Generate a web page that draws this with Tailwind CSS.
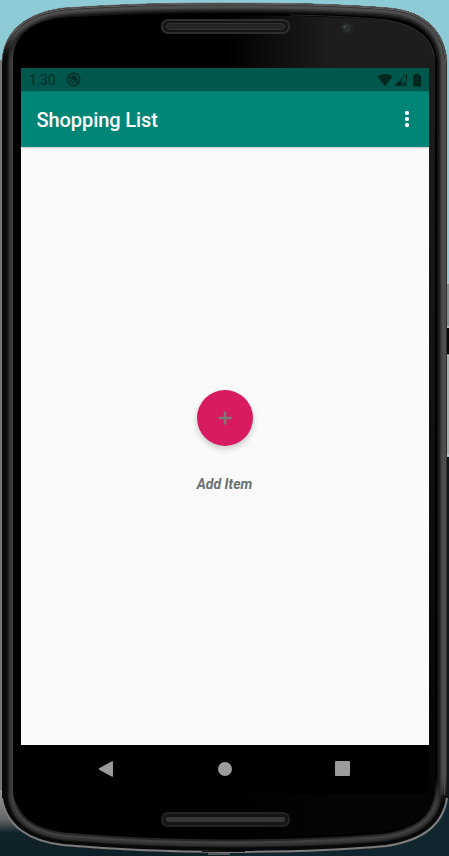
<!DOCTYPE html>
<html lang="en">
<head>
<meta charset="utf-8">
<meta name="viewport" content="width=device-width, initial-scale=1">
<title>Shopping List</title>
<script src="https://cdn.jsdelivr.net/npm/@tailwindcss/browser@4"></script>
</head>
<body class="relative h-[856px] w-[449px] overflow-hidden bg-[#8fcbd6] font-['Roboto',sans-serif]">
<!-- device frame and wallpaper -->
<svg class="absolute inset-0" width="449" height="856" viewBox="0 0 449 856" aria-hidden="true">
  <defs>
    <linearGradient id="glassT" x1="225" x2="330" y1="0" y2="0" gradientUnits="userSpaceOnUse"><stop offset="0" stop-color="#000"/><stop offset="1" stop-color="#1d1d1d"/></linearGradient>
    <linearGradient id="fade" x1="0" x2="0" y1="60" y2="780" gradientUnits="userSpaceOnUse"><stop offset="0" stop-color="#000" stop-opacity="0"/><stop offset="1" stop-color="#000" stop-opacity=".85"/></linearGradient>
    <linearGradient id="sea" x1="0" x2="0" y1="790" y2="856" gradientUnits="userSpaceOnUse"><stop offset="0" stop-color="#999"/><stop offset=".45" stop-color="#606464"/><stop offset=".65" stop-color="#10222a"/><stop offset="1" stop-color="#0d2028"/></linearGradient>
    <filter id="soft"><feGaussianBlur stdDeviation="1"/></filter>
    <filter id="wide" x="-20%" y="-20%" width="140%" height="140%"><feGaussianBlur stdDeviation="8"/></filter>
    <path id="body" d="M2 62C3 30 29 12 64 8C120 4 170 3 225 3C282 3 340 4 389 8C424 11 445 31 447 62V799C443 827 420 842 386 847C340 851 280 853 225 853C167 853 110 850 63 846C29 842 6 827 2 799Z"/>
    <path id="glass" d="M13 57C15 36 32 21 61 18C120 15 170 15 225 15C282 15 340 16 385 19C417 22 434 37 435 57V790C434 812 414 826 385 830C340 834 280 837 225 837C167 837 110 834 62 828C34 824 15 812 13 792Z"/>
    <clipPath id="phone"><use href="#body"/></clipPath>
    <mask id="shade" maskUnits="userSpaceOnUse" x="0" y="0" width="449" height="856"><path d="M-30 45H50V790H500V900H-30Z" fill="#fff" filter="url(#wide)"/></mask>
  </defs>
  <path d="M0 60H5V790H0Z" fill="#777"/>
  <path d="M0 790H230V856H0Z" fill="url(#sea)"/>
  <path d="M225 799H449V856H225Z" fill="#10252d"/>
  <path d="M444 283H449V328H444Z" fill="#819694"/><path d="M444 328H449V355H444Z" fill="#050808"/><path d="M444 355H449V455H444Z" fill="#a2b2ae"/><path d="M444 457H449V799H444Z" fill="#101719"/>
  <path d="M444 283H449M444 327H449M444 355H449M444 455H449" stroke="#ddd"/>
  <g clip-path="url(#phone)" fill="none">
    <use href="#body" fill="#000"/>
    <g>
      <use href="#body" stroke="#101010" stroke-width="20"/>
      <use href="#body" stroke="#202020" stroke-width="17"/>
      <use href="#body" stroke="#333" stroke-width="14"/>
      <use href="#body" stroke="#484848" stroke-width="11"/>
      <use href="#body" stroke="#505050" stroke-width="8"/>
      <use href="#body" stroke="#333" stroke-width="5"/>
      <use href="#body" stroke="#707070" stroke-width="3"/>
      <use href="#body" stroke="#1a1a1a" stroke-width="1.5"/>
    </g>
    <g mask="url(#shade)">
      <use href="#body" stroke="#262626" stroke-width="27"/>
      <use href="#body" stroke="#404040" stroke-width="23"/>
      <use href="#body" stroke="#383838" stroke-width="19"/>
      <use href="#body" stroke="#2e2e2e" stroke-width="16"/>
      <use href="#body" stroke="#1c1c1c" stroke-width="13"/>
      <use href="#body" stroke="#080808" stroke-width="11"/>
    </g>
    <path d="M436 60V792" stroke="#000" stroke-width="4" filter="url(#soft)"/>
    <path d="M442 60V795M444.500 60V795" stroke="#4a4a4a" stroke-width="1"/>
  </g>
  <use href="#glass" fill="#000"/>
  <path d="M225 15C282 15 340 17 384 20C413 23 432 36 435 57V790C434 812 414 826 385 830C340 834 280 836 225 836Z" fill="url(#glassT)"/>
  <path d="M225 15C282 15 340 17 384 20C413 23 432 36 435 57V790C434 812 414 826 385 830C340 834 280 836 225 836Z" fill="url(#fade)"/>
  <path d="M290 15Q350 16 386 20C412 24 432 36 434 57" fill="none" stroke="#383838" stroke-width=".7"/>
  <path d="M2 62C3 30 29 12 64 8C120 4 170 3 225 3C282 3 340 4 389 8C424 11 445 31 447 62" fill="none" stroke="#777" stroke-width=".7"/>
  <path d="M2 799C6 827 29 842 63 846C110 850 167 853 225 853C280 853 340 851 386 847C420 842 443 827 447 799" transform="translate(0 -1)" fill="none" stroke="#7d7d7d" stroke-width="2"/>
  <g stroke-width="2"><rect x="162" y="20" width="127" height="13" rx="6" fill="#151515" stroke="#2d2d2d"/><rect x="166.500" y="23.500" width="118" height="6" rx="3" fill="#252525" stroke="#333" stroke-width="1"/>
  <rect x="162" y="813" width="127" height="13" rx="6" fill="#151515" stroke="#232323"/><rect x="166" y="817" width="119" height="5" rx="2" fill="#363636"/></g>
  <circle cx="347" cy="28" r="6.500" fill="#232323"/><circle cx="347" cy="28" r="4" fill="#2d2f2f"/><circle cx="344.500" cy="26.500" r="1.500" fill="#394b49"/>
  <path d="M202 851.500H245" stroke="#111"/><path d="M208 854H230" stroke="#555" stroke-width="2"/>
</svg>

<main class="relative mt-[68px] ml-[21px] flex h-[726px] w-[408px] flex-col bg-[#fafafa]">
  <div class="flex h-[23px] shrink-0 items-center bg-[#00574b] pr-2 pl-2 text-[#002d27]">
    <span class="pt-px text-[14px] leading-none tracking-[-.1px]">1:30</span>
    <svg class="ml-[10px]" width="15" height="15" viewBox="0 0 15 15" fill="none" stroke="currentColor" stroke-width="1.4"><circle cx="7.5" cy="7.500" r="6.200"/><path d="M4.500 10C3.300 8 3.700 6 5 4.800M4 4L11.500 11.500"/><path d="M6 3.600C9 3 11.500 5 11.500 8.500H9.500L6 5Z" fill="currentColor" stroke="none"/><path d="M5.500 8.500L8.500 11.500H6Z" fill="currentColor" stroke="none"/></svg>
    <div class="ml-auto flex items-center text-[#002620]">
      <svg width="16" height="14" viewBox="0 0 16 14"><path d="M.3 3.600C4.500.1 11.500.1 15.700 3.600L8 13Z" fill="currentColor"/></svg>
      <svg class="ml-px" width="14" height="14" viewBox="0 0 14 14"><path d="M1 12.500L12.500 1V8M1 12.500H7" fill="none" stroke="currentColor"/><path d="M1 13L7.500 6.500V13Z" fill="currentColor"/><path d="M8.500 9L12.500 13M12.500 9L8.500 13" stroke="currentColor" stroke-width="1.400"/></svg>
      <svg class="ml-[5px]" width="8" height="14" viewBox="0 0 8 14"><path d="M2.300 .5H5.700V2H8V13.500H0V2H2.300Z" fill="currentColor"/></svg>
    </div>
  </div>
  <header class="z-10 flex h-14 shrink-0 items-center justify-between border-t border-[#007a6c] bg-[#008577] pr-5 pl-[15.5px] shadow-[0_1px_2px_rgba(0,0,0,.2)]">
    <h1 class="text-[20px] leading-none font-medium tracking-[-.08px] text-white">Shopping List</h1>
    <svg class="mb-px" width="4" height="16" viewBox="0 0 4 16" fill="#fff" role="img" aria-label="More options"><circle cx="2" cy="2" r="2.100"/><circle cx="2" cy="8" r="2.100"/><circle cx="2" cy="14" r="2.100"/></svg>
  </header>
  <section class="flex grow flex-col items-center pt-[243px] pr-px">
    <button class="flex size-14 items-center justify-center rounded-full bg-[#d81b60] shadow-[0_3px_6px_rgba(0,0,0,.2)]" aria-label="Add">
      <svg width="14" height="14" viewBox="0 0 14 14"><path d="M7 .5V13.500M.5 7H13.500" stroke="#7a7a78" stroke-width="2.600"/></svg>
    </button>
    <p class="mt-[30px] text-[14px] leading-4 font-bold text-[#6a7271] italic">Add Item</p>
  </section>
  <nav class="flex h-[49px] shrink-0 items-center justify-between bg-black pr-[79px] pb-[2px] pl-[77px]">
    <svg width="16" height="16" viewBox="0 0 16 16"><path d="M1.200 7.200L14 .2Q15 -.1 15 1V15Q15 16 14 15.700L1.200 8.800Q.2 8 1.200 7.200Z" fill="#9b9b9d"/></svg>
    <span class="size-[14px] rounded-full bg-[#9b9b9d]"></span>
    <span class="size-[15px] rounded-[1px] bg-[#9b9b9d]"></span>
  </nav>
</main>
</body>
</html>
